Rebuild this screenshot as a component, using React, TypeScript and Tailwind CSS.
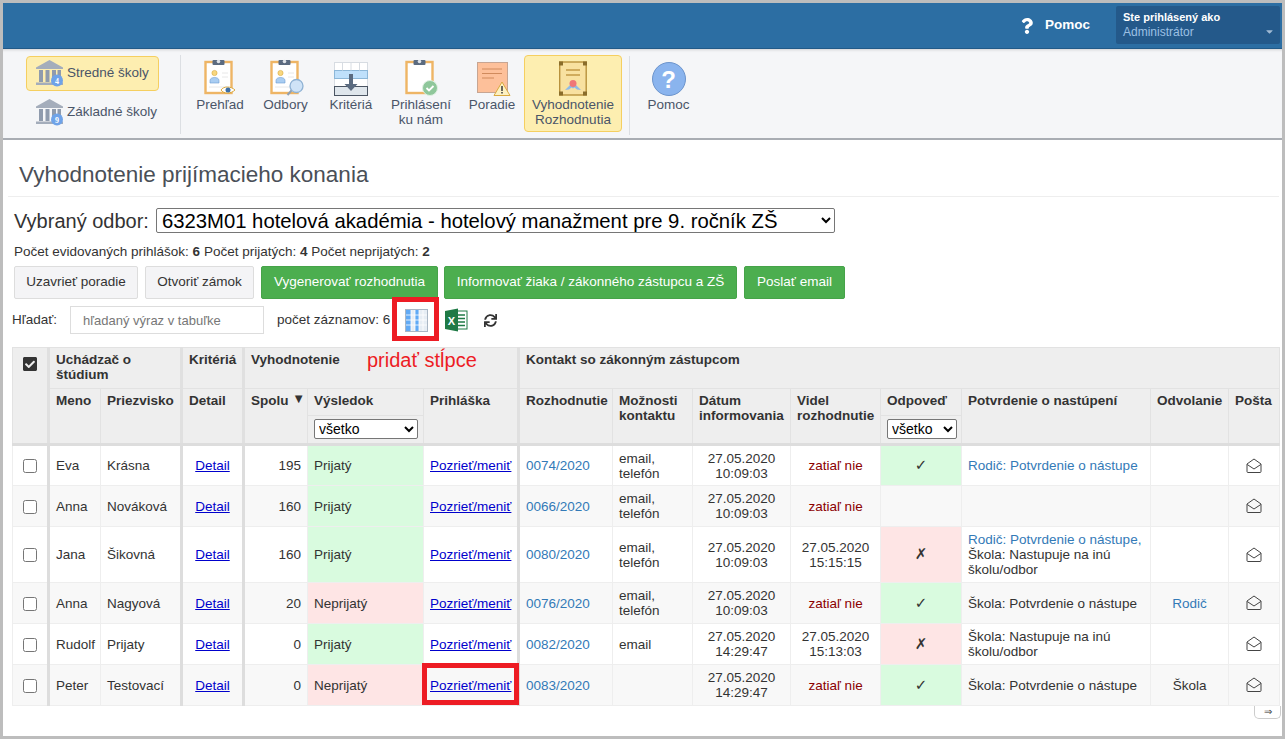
import { FaCheckSquare, FaSync, FaCaretDown, FaQuestion } from "react-icons/fa"

const rows = [
  { meno: "Eva", priezvisko: "Krásna", spolu: "195", ok: true, rozh: "0074/2020", kontakt: ["email,", "telefón"], datum: ["27.05.2020", "10:09:03"], videl: null, odp: "yes", h: "h-[41px]" },
  { meno: "Anna", priezvisko: "Nováková", spolu: "160", ok: true, rozh: "0066/2020", kontakt: ["email,", "telefón"], datum: ["27.05.2020", "10:09:03"], videl: null, odp: "", h: "h-[41px]" },
  { meno: "Jana", priezvisko: "Šikovná", spolu: "160", ok: true, rozh: "0080/2020", kontakt: ["email,", "telefón"], datum: ["27.05.2020", "10:09:03"], videl: ["27.05.2020", "15:15:15"], odp: "no", h: "h-[56px]" },
  { meno: "Anna", priezvisko: "Nagyová", spolu: "20", ok: false, rozh: "0076/2020", kontakt: ["email,", "telefón"], datum: ["27.05.2020", "10:09:03"], videl: null, odp: "yes", h: "h-[41px]" },
  { meno: "Rudolf", priezvisko: "Prijaty", spolu: "0", ok: true, rozh: "0082/2020", kontakt: ["email"], datum: ["27.05.2020", "14:29:47"], videl: ["27.05.2020", "15:13:03"], odp: "no", h: "h-[41px]" },
  { meno: "Peter", priezvisko: "Testovací", spolu: "0", ok: false, rozh: "0083/2020", kontakt: [], datum: ["27.05.2020", "14:29:47"], videl: null, odp: "yes", h: "h-[41px]" },
]

function Clipboard({ children }: { children?: React.ReactNode }) {
  return (
    <svg width="46" height="37" viewBox="0 0 46 37">
      <rect x="8.500" y="3" width="26" height="31" fill="#fff" stroke="#eeb565" strokeWidth="2.400" />
      <rect x="15.500" y="1" width="12" height="5" rx="1" fill="#5b6b80" />
      <circle cx="21.500" cy="2.500" r="1.800" fill="#dfe3e8" />
      {children}
    </svg>
  )
}

function Person() {
  return (
    <g>
      <circle cx="17.500" cy="14" r="2.600" fill="#f8d77f" stroke="#d9a93f" strokeWidth="0.600" />
      <path d="M13 24v-2.500c0-2 2-3 4.500-3s4.500 1 4.500 3V24z" fill="#a9cdf2" stroke="#6d9bd0" strokeWidth="0.600" />
      <path d="M25 14h6M25 18h6M12 28h18" stroke="#e8e8e8" strokeWidth="1" />
    </g>
  )
}

function ToolItem({ icon, label, className }: { icon: React.ReactNode; label: React.ReactNode; className: string }) {
  return (
    <div className={"flex flex-col items-center leading-[15px] text-center text-[#4a5568] " + className}>
      <div className="h-[37px] flex items-end justify-center">{icon}</div>
      <div className="mt-[1px]">{label}</div>
    </div>
  )
}

function School({ n }: { n: string }) {
  return (
    <svg width="28" height="27" viewBox="0 0 28 27" className="shrink-0">
      <path d="M0 7.500 13.500 0 27 7.500V9H0z" fill="#a4adbb" />
      <path d="M3 10h4v12H3zM9.500 10h4v12h-4zM16 10h4v12h-4zM21.500 10h3.500v12h-3.500z" fill="#8f9bad" />
      <path d="M0 22.500h27V25H0z" fill="#a4adbb" />
      <circle cx="21" cy="20.500" r="6" fill="#6fa3e8" />
      <text x="21" y="23.500" textAnchor="middle" fontSize="8" fontWeight="700" fill="#fff" fontFamily="Liberation Serif, serif">{n}</text>
    </svg>
  )
}

function Envelope() {
  return (
    <svg width="16" height="16" viewBox="0 0 16 16" className="mx-auto" fill="none" stroke="#444" strokeWidth="1">
      <path d="M1 6 8 1l7 5v7.500a1 1 0 0 1-1 1H2a1 1 0 0 1-1-1z" />
      <path d="M1.200 6.500 8 11l6.800-4.500" />
    </svg>
  )
}

const th = "bg-[#eeeeee] border border-[#e2e2e2] align-top text-left font-bold text-[13.500px] leading-[15px] text-[#333] px-[6px] pt-[4px]"
const sep = " border-r-[3px] border-r-[#e0e0e0]"
const under = " border-b-[3px] border-b-[#dddddd]"
const thin = "border border-[#eeeeee] px-[6px] py-0"
const thick = "border border-[#eeeeee] border-r-[3px] border-r-[#dddddd] px-[6px] py-0"

export default function App() {
  return (
    <div className="h-screen overflow-hidden border-[3px] border-[#bdbdbd] bg-white text-[13.500px] text-[#333] font-['Liberation_Sans',Arial,sans-serif]">
      {/* Top bar */}
      <div className="h-[46px] bg-[#2c6ea3] border-b border-[#225a88] flex items-center justify-end pr-[2px] text-white">
        <FaQuestion className="w-[12px] h-[16px] mr-[12px]" />
        <span className="font-bold text-[13.500px] mr-[26px]">Pomoc</span>
        <div className="w-[164px] h-[38px] -mt-[1px] bg-[#24598a] rounded-[2px] pl-[7px] pt-[4px] relative">
          <div className="font-bold text-[11px] leading-[14px]">Ste prihlásený ako</div>
          <div className="text-[12px] leading-[16px] text-[#9cc0e4]">Administrátor</div>
          <FaCaretDown className="absolute right-[5px] top-[20px] w-[11px] h-[11px] text-[#9fb9d3]" />
        </div>
      </div>

      {/* Toolbar */}
      <div className="h-[91px] bg-[#f5f6f8] border-b-2 border-[#a9adb3] shadow-[inset_0_3px_3px_-2px_rgba(0,0,0,0.15)] flex pt-[7px] pl-[23px]">
        <div className="w-[133px] flex flex-col gap-[4px]">
          <div className="h-[35px] bg-[#fdeeb0] border border-[#f5cf60] rounded-[4px] flex items-center pl-[9px] gap-[3px] text-[#4a5568] whitespace-nowrap">
            <School n="4" />
            Stredné školy
          </div>
          <div className="h-[35px] border border-transparent flex items-center pl-[9px] gap-[3px] text-[#4a5568] whitespace-nowrap">
            <School n="9" />
            Základné školy
          </div>
        </div>
        <div className="w-px h-[79px] -mt-[1px] bg-[#dcdfe3] ml-[21px]" />
        <div className="flex pt-[3px]">
          <ToolItem
            className="w-[78px]"
            label="Prehľad"
            icon={
              <Clipboard>
                <Person />
                <path d="M24 31c2.500-4 10-4 14 0-4 4-11.500 4-14 0z" fill="#fff" stroke="#d9a93f" />
                <circle cx="31" cy="31" r="2.500" fill="#3d6fa8" />
              </Clipboard>
            }
          />
          <ToolItem
            className="w-[53px]"
            label="Odbory"
            icon={
              <Clipboard>
                <Person />
                <circle cx="33.500" cy="27" r="6.500" fill="#cfe3f7" stroke="#8fb2d4" strokeWidth="1.300" />
                <path d="M28.500 31.500 24.500 36" stroke="#8fa0b3" strokeWidth="2" />
              </Clipboard>
            }
          />
          <ToolItem
            className="w-[78px]"
            label="Kritériá"
            icon={
              <svg width="34" height="35" viewBox="0 0 34 35">
                <rect x="0.500" y="1.500" width="33" height="33" fill="#fff" stroke="#d7dce2" />
                <rect x="0.500" y="9.500" width="33" height="8" fill="#bfe0fb" stroke="#8db7d8" />
                <path d="M8.500 1.500v8M17 1.500v8M25.500 1.500v8" stroke="#d7dce2" />
                <rect x="0.500" y="25.500" width="33" height="9" fill="#dfe6ec" stroke="#4b5563" />
                <path d="M15 13h4v10h4.500L17 30l-6.500-7H15z" fill="#5b6b80" />
              </svg>
            }
          />
          <ToolItem
            className="w-[62px]"
            label={<>Prihlásení<br />ku nám</>}
            icon={
              <Clipboard>
                <circle cx="32" cy="29" r="7.500" fill="#8fc79b" stroke="#dff0e2" />
                <path d="m28.500 29 2.500 2.500 4.500-4.500" fill="none" stroke="#fff" strokeWidth="1.800" />
              </Clipboard>
            }
          />
          <ToolItem
            className="w-[80px]"
            label="Poradie"
            icon={
              <svg width="44" height="37" viewBox="0 0 44 37">
                <rect x="7.500" y="3.500" width="30" height="30" fill="#fdc09a" stroke="#c7a592" />
                <path d="M12 10h20M12 14.500h20M12 19h12" stroke="#d08a5c" />
                <path d="m32 23 8 13.500H24z" fill="#fdf1c2" stroke="#d9a93f" />
                <path d="M32 27v5M32 33v1.500" stroke="#444" strokeWidth="1.600" />
              </svg>
            }
          />
          <div className="w-[98px] h-[77px] -mt-[4px] ml-[-8px] bg-[#fdeeb0] border border-[#f5cf60] rounded-[4px] pt-[3px]">
            <ToolItem
              className="w-full"
              label={<>Vyhodnotenie<br />Rozhodnutia</>}
              icon={
                <svg width="28" height="35" viewBox="0 0 28 35">
                  <rect x="0.700" y="1" width="26.500" height="33" fill="#f8e1a0" stroke="#b8923c" strokeWidth="1.400" />
                  <rect x="0" y="0.500" width="4" height="4" fill="#8a6d2a" />
                  <rect x="24" y="0.500" width="4" height="4" fill="#8a6d2a" />
                  <rect x="0" y="30.500" width="4" height="4" fill="#8a6d2a" />
                  <rect x="24" y="30.500" width="4" height="4" fill="#8a6d2a" />
                  <path d="M7 9h14M7 14h14" stroke="#d0ab5c" strokeWidth="2" />
                  <path d="m6 29 6-6h4l6 6-4-.5-2.500-2-1.500 1-1.500-1-2.500 2z" fill="#8ebbe8" />
                  <circle cx="14" cy="22.500" r="3.500" fill="#ef7777" />
                </svg>
              }
            />
          </div>
          <div className="w-px h-[79px] -mt-[3px] bg-[#dcdfe3] ml-[7px]" />
          <ToolItem
            className="w-[77px]"
            label="Pomoc"
            icon={
              <div className="w-[34px] h-[34px] rounded-full bg-[#8ab4ee] border border-[#6c94cc] text-white text-[24px] font-bold flex items-center justify-center">
                ?
              </div>
            }
          />
        </div>
      </div>

      {/* Content */}
      <div className="relative px-[11px]">
        <div className="ml-[-6px] mr-[-8px] h-[57px] border-b border-[#eeeeee] pt-[20px] pl-[11px] text-[22.500px] leading-[30px] text-[#4a4f57]">
          Vyhodnotenie prijímacieho konania
        </div>

        <div className="flex items-center mt-[11px] h-[25px] text-[20px] text-[#333]">
          <span className="mr-[7px]">Vybraný odbor:</span>
          <select className="w-[679px] h-[25px] border border-[#767676] rounded-[2px] bg-white text-black text-[20.300px] pl-[1px]">
            <option>6323M01 hotelová akadémia - hotelový manažment pre 9. ročník ZŠ</option>
          </select>
        </div>

        <div className="mt-[11px] text-[13.500px] leading-[16px]">
          Počet evidovaných prihlášok: <b>6</b> Počet prijatých: <b>4</b> Počet neprijatých: <b>2</b>
        </div>

        <div className="flex gap-[7px] mt-[6px] text-[13.500px]">
          <button className="w-[124px] h-[33px] bg-[#f4f4f6] border border-[#dddddd] rounded-[2px] text-[#333]">Uzavrieť poradie</button>
          <button className="w-[109px] h-[33px] bg-[#f4f4f6] border border-[#dddddd] rounded-[2px] text-[#333]">Otvoriť zámok</button>
          <button className="w-[177px] h-[33px] bg-[#4cae4f] border border-[#46a349] rounded-[2px] text-white">Vygenerovať rozhodnutia</button>
          <button className="w-[293px] h-[33px] ml-[-1px] bg-[#4cae4f] border border-[#46a349] rounded-[2px] text-white">Informovať žiaka / zákonného zástupcu a ZŠ</button>
          <button className="w-[101px] h-[33px] bg-[#4cae4f] border border-[#46a349] rounded-[2px] text-white">Poslať email</button>
        </div>

        <div className="flex items-center mt-[7px] h-[28px] text-[13.500px]">
          <span className="ml-[-2px] w-[58px]">Hľadať:</span>
          <input
            className="w-[194px] h-[28px] border border-[#dddddd] px-[12px] text-[13px] placeholder:text-[#777]"
            placeholder="hľadaný výraz v tabuľke"
          />
          <span className="ml-[13px] w-[113px] whitespace-nowrap">počet záznamov: 6</span>
          <svg width="23" height="23" viewBox="0 0 23 23" className="ml-[15px]">
            <rect x="0.500" y="0.500" width="22" height="22" fill="#e6edf4" stroke="#a9b6c4" />
            <rect x="1" y="1" width="5" height="21" fill="#60aaf5" />
            <rect x="10" y="1" width="4" height="21" fill="#60aaf5" />
            <path d="M6 1v21M10 1v21M14 1v21M18 1v21M1 6h21M1 11h21M1 16h21" stroke="#fff" strokeWidth="0.800" />
          </svg>
          <svg width="24" height="24" viewBox="0 0 24 24" className="ml-[16px]">
            <rect x="10" y="3" width="13" height="18" fill="#fff" stroke="#1f7a45" />
            <path d="M13 7h8M13 10.500h8M13 14h8M13 17.500h8" stroke="#1f7a45" strokeWidth="1.400" />
            <path d="M1 3 14 0.500v23L1 21z" fill="#1f7a45" />
            <text x="7.500" y="16.500" textAnchor="middle" fontSize="11" fontWeight="700" fill="#fff">X</text>
          </svg>
          <FaSync className="ml-[16px] w-[13px] h-[13px] text-[#333]" />
        </div>

        {/* Table */}
        <table className="table-fixed border-collapse mt-[13px] w-[1267px] ml-[-2px]">
          <colgroup>
            <col className="w-[36px]" />
            <col className="w-[52px]" />
            <col className="w-[81px]" />
            <col className="w-[62px]" />
            <col className="w-[64px]" />
            <col className="w-[116px]" />
            <col className="w-[95px]" />
            <col className="w-[94px]" />
            <col className="w-[80px]" />
            <col className="w-[98px]" />
            <col className="w-[90px]" />
            <col className="w-[81px]" />
            <col className="w-[189px]" />
            <col className="w-[78px]" />
            <col className="w-[51px]" />
          </colgroup>
          <thead>
            <tr className="h-[41px]">
              <th rowSpan={3} className={th + sep + under}>
                <FaCheckSquare className="w-[16px] h-[16px] ml-[3px] mt-[4px] text-[#333]" />
              </th>
              <th colSpan={2} className={th + sep}>Uchádzač o<br />štúdium</th>
              <th className={th + sep}>Kritériá</th>
              <th colSpan={3} className={th + sep}>Vyhodnotenie</th>
              <th colSpan={8} className={th}>Kontakt so zákonným zástupcom</th>
            </tr>
            <tr className="h-[27px]">
              <th rowSpan={2} className={th + under}>Meno</th>
              <th rowSpan={2} className={th + sep + under}>Priezvisko</th>
              <th rowSpan={2} className={th + sep + under}>Detail</th>
              <th rowSpan={2} className={th + " relative" + under}>
                Spolu
                <span className="absolute right-[2px] top-[3px] text-[13px] leading-[13px]">▼</span>
              </th>
              <th className={th}>Výsledok</th>
              <th rowSpan={2} className={th + sep + under}>Prihláška</th>
              <th rowSpan={2} className={th + under}>Rozhodnutie</th>
              <th rowSpan={2} className={th + under}>Možnosti<br />kontaktu</th>
              <th rowSpan={2} className={th + under}>Dátum<br />informovania</th>
              <th rowSpan={2} className={th + under}>Videl<br />rozhodnutie</th>
              <th className={th}>Odpoveď</th>
              <th rowSpan={2} className={th + under}>Potvrdenie o nastúpení</th>
              <th rowSpan={2} className={th + under}>Odvolanie</th>
              <th rowSpan={2} className={th + under}>Pošta</th>
            </tr>
            <tr className="h-[29px]">
              <th className={"bg-[#eeeeee] border border-[#e2e2e2] px-[6px] py-0 align-middle" + under}>
                <select className="w-[104px] h-[20px] border border-[#767676] rounded-[2px] bg-white text-black text-[14px] font-normal">
                  <option>všetko</option>
                </select>
              </th>
              <th className={"bg-[#eeeeee] border border-[#e2e2e2] px-[6px] py-0 align-middle" + under}>
                <select className="w-[70px] h-[20px] border border-[#767676] rounded-[2px] bg-white text-black text-[14px] font-normal">
                  <option>všetko</option>
                </select>
              </th>
            </tr>
          </thead>
          <tbody>
            {rows.map((r, i) => (
              <tr key={i} className={r.h + " leading-[15px] " + (i % 2 ? "bg-[#f8f8f8]" : "bg-white")}>
                <td className={thick + " text-center"}>
                  <input type="checkbox" className="w-[14px] h-[14px] align-middle" />
                </td>
                <td className={thin}>{r.meno}</td>
                <td className={thick}>{r.priezvisko}</td>
                <td className={thick + " text-center"}>
                  <a className="underline text-[#0000cc]">Detail</a>
                </td>
                <td className={thin + " text-right"}>{r.spolu}</td>
                <td className={thin + (r.ok ? " bg-[#d9fbdf]" : " bg-[#fee5e5]")}>{r.ok ? "Prijatý" : "Neprijatý"}</td>
                <td className={thick + " whitespace-nowrap"}>
                  <a className="underline text-[#0000cc]">Pozrieť/meniť</a>
                </td>
                <td className={thin + " text-[#337ab7]"}>{r.rozh}</td>
                <td className={thin}>
                  {r.kontakt.map((k) => (
                    <div key={k}>{k}</div>
                  ))}
                </td>
                <td className={thin + " text-center"}>
                  <div>{r.datum[0]}</div>
                  <div>{r.datum[1]}</div>
                </td>
                <td className={thin + " text-center"}>
                  {r.videl ? (
                    <>
                      <div>{r.videl[0]}</div>
                      <div>{r.videl[1]}</div>
                    </>
                  ) : (
                    <span className="text-[#8b0000]">zatiaľ nie</span>
                  )}
                </td>
                <td
                  className={
                    thin +
                    " text-center font-['DejaVu_Sans'] text-[15px]" +
                    (r.odp === "yes" ? " bg-[#d9fbdf]" : r.odp === "no" ? " bg-[#fee5e5]" : "")
                  }
                >
                  {r.odp === "yes" ? "✓" : r.odp === "no" ? "✗" : ""}
                </td>
                <td className={thin}>
                  {i === 0 && <span className="text-[#337ab7]">Rodič: Potvrdenie o nástupe</span>}
                  {i === 2 && (
                    <>
                      <span className="text-[#337ab7]">Rodič: Potvrdenie o nástupe,</span>
                      <br />
                      Škola: Nastupuje na inú
                      <br />
                      školu/odbor
                    </>
                  )}
                  {(i === 3 || i === 5) && "Škola: Potvrdenie o nástupe"}
                  {i === 4 && (
                    <>
                      Škola: Nastupuje na inú
                      <br />
                      školu/odbor
                    </>
                  )}
                </td>
                <td className={thin + " text-center"}>
                  {i === 3 && <span className="text-[#337ab7]">Rodič</span>}
                  {i === 5 && "Škola"}
                </td>
                <td className={thin}>
                  <Envelope />
                </td>
              </tr>
            ))}
          </tbody>
        </table>

        <div className="flex justify-end mr-[-10px]">
          <div className="w-[27px] h-[13px] border border-t-0 border-[#cccccc] rounded-b-[5px] text-[10px] leading-[11px] text-center text-[#333]">
            ⇒
          </div>
        </div>

        {/* Annotations */}
        <span className="absolute left-[364px] top-[208px] text-[20px] leading-[24px] text-[#ed1c24]">pridať stĺpce</span>
        <div className="absolute left-[389px] top-[157px] w-[47px] h-[44px] border-[5px] border-[#ed1c24]" />
        <div className="absolute left-[419px] top-[523px] w-[97px] h-[42px] border-[5px] border-[#ed1c24]" />
      </div>
    </div>
  )
}
